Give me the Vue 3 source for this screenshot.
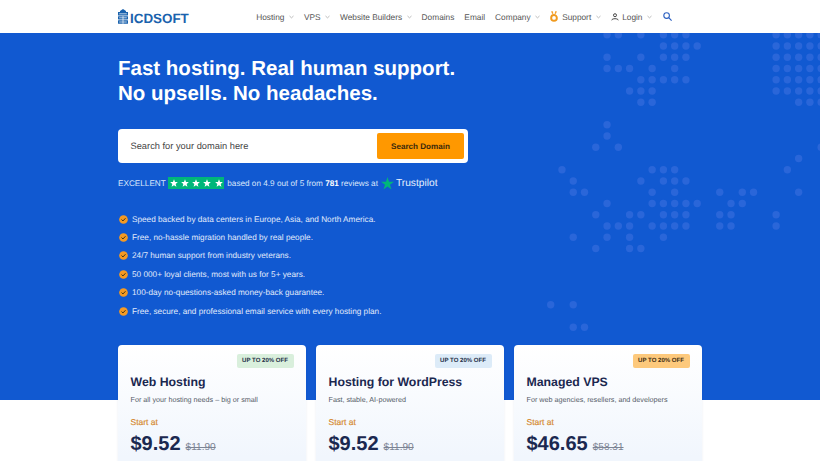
<script setup>
const navItems = [
  { label: 'Hosting', chevron: true },
  { label: 'VPS', chevron: true },
  { label: 'Website Builders', chevron: true },
  { label: 'Domains' },
  { label: 'Email' },
  { label: 'Company', chevron: true },
  { label: 'Support', chevron: true, icon: 'medal' },
  { label: 'Login', chevron: true, icon: 'user' },
]
const benefits = [
  'Speed backed by data centers in Europe, Asia, and North America.',
  'Free, no-hassle migration handled by real people.',
  '24/7 human support from industry veterans.',
  '50 000+ loyal clients, most with us for 5+ years.',
  '100-day no-questions-asked money-back guarantee.',
  'Free, secure, and professional email service with every hosting plan.',
]
const plans = [
  { title: 'Web Hosting', desc: 'For all your hosting needs – big or small', price: '$9.52', old: '$11.90', tone: 'green' },
  { title: 'Hosting for WordPress', desc: 'Fast, stable, AI-powered', price: '$9.52', old: '$11.90', tone: 'blue' },
  { title: 'Managed VPS', desc: 'For web agencies, resellers, and developers', price: '$46.65', old: '$58.31', tone: 'orange' },
]
const rows = {
  0: [5, 6, 8, 10, 11, 12, 20, 21, 22, 23, 24],
  1: [10, 11, 12, 13, 20, 21, 22, 23, 24],
  2: [5, 8, 10, 11, 12, 20, 21, 22, 23, 24],
  3: [5, 6, 7, 9, 11, 20, 21, 22, 23, 24],
  4: [8, 9, 10, 11, 12, 20, 21, 22, 23, 24],
  5: [7, 8, 9, 20, 21, 22, 23, 24],
  6: [8, 9, 22, 23, 24],
  8: [5],
  9: [5],
  10: [4, 6, 24],
  11: [22],
  12: [1, 9, 10, 11, 21],
  13: [2, 8, 10, 11, 12],
  14: [2, 3, 9, 11, 15, 17, 18, 22],
  15: [5, 9, 10, 11, 12, 13, 16, 17],
  16: [4, 7, 8, 10, 11, 12, 15, 16, 20],
  17: [5, 6, 7, 9, 10, 11, 12, 15, 16, 20],
  18: [2, 5, 7, 10],
  19: [4, 7, 8],
  24: [0, 2],
  26: [2, 3],
}
const dots = Object.entries(rows).flatMap(([r, cols]) =>
  cols.map((c) => ({ x: 70.7 + 11.27 * c, y: 1.7 + 11.25 * Number(r) }))
)
</script>

<template>
  <div class="page">
    <header class="topbar">
      <div class="brand">
        <svg class="brand-icon" viewBox="0 0 10 15" width="10" height="15" aria-hidden="true">
          <path d="M5 0 L8 2 V3 H10 V6.4 H0 V3 H2 V2 Z" fill="#1a62ad" />
          <rect x="0" y="7.2" width="10" height="3.2" rx=".4" fill="#1a62ad" />
          <rect x="0" y="11.2" width="10" height="3.6" rx=".4" fill="#1a62ad" />
          <path d="M1.2 4.8 H8.8 M1.2 8.8 H8.8 M1.2 13 H8.8" stroke="#fff" stroke-width=".7" />
          <path d="M5 7.2 V14.8" stroke="#fff" stroke-width=".7" />
        </svg>
        <span class="brand-name">ICDSOFT</span>
      </div>
      <nav class="nav">
        <a v-for="item in navItems" :key="item.label" class="nav-item" :class="{ 'has-chevron': item.chevron }">
          <svg v-if="item.icon === 'medal'" class="medal" viewBox="0 0 9 12" width="8" height="11" aria-hidden="true">
            <path d="M2 0 L3.2 3 M7 0 L5.8 3" stroke="#f4a12c" stroke-width="1.6" />
            <circle cx="4.5" cy="7.6" r="3.2" fill="none" stroke="#f09a1f" stroke-width="2.2" />
          </svg>
          <svg v-if="item.icon === 'user'" class="user" viewBox="0 0 9 9" width="8" height="8" aria-hidden="true">
            <circle cx="4.5" cy="2.5" r="1.7" fill="none" stroke="#333" stroke-width="1" />
            <path d="M.8 8.2 C1 5.8 8 5.8 8.2 8.2" fill="none" stroke="#333" stroke-width="1" />
          </svg>
          <span>{{ item.label }}</span>
          <svg v-if="item.chevron" class="chevron" viewBox="0 0 6 4" width="5" height="4" aria-hidden="true">
            <path d="M.6 .8 L3 3 L5.4 .8" fill="none" stroke="#9a9a9a" stroke-width=".8" />
          </svg>
        </a>
        <svg class="search-icon" viewBox="0 0 9 9" width="9" height="9" aria-hidden="true">
          <circle cx="3.6" cy="3.6" r="2.8" fill="none" stroke="#2a5fc0" stroke-width="1.1" />
          <path d="M5.7 5.7 L8.6 8.6" stroke="#2a5fc0" stroke-width="1.2" />
        </svg>
      </nav>
    </header>

    <section class="hero">
      <svg class="map" width="340" height="310" viewBox="0 0 340 310" aria-hidden="true">
        <circle v-for="(d, i) in dots" :key="i" :cx="d.x" :cy="d.y" r="3.7" fill="#2a66d9" />
      </svg>
      <div class="hero-inner">
        <h1>Fast hosting. Real human support.<br />No upsells. No headaches.</h1>
        <div class="search-box">
          <span class="placeholder">Search for your domain here</span>
          <button class="search-btn">Search Domain</button>
        </div>
        <div class="rating">
          <span>EXCELLENT</span>
          <span class="stars">
            <svg v-for="n in 5" :key="n" viewBox="0 0 10 10" width="8" height="8" aria-hidden="true">
              <path d="M5 .4 L6.3 3.7 L9.8 3.9 L7.1 6.1 L8 9.6 L5 7.7 L2 9.6 L2.9 6.1 L.2 3.9 L3.7 3.7 Z" fill="#fff" />
            </svg>
          </span>
          <span>based on 4.9 out of 5 from <b>781</b> reviews at</span>
          <span class="tp">
            <svg viewBox="0 0 12 12" width="13" height="13" aria-hidden="true">
              <path d="M6 0 L7.4 4.4 L12 4.4 L8.3 7.1 L9.7 11.6 L6 8.8 L2.3 11.6 L3.7 7.1 L0 4.4 L4.6 4.4 Z" fill="#00b67a" />
            </svg>
            <span class="tp-name">Trustpilot</span>
          </span>
        </div>
        <ul class="benefits">
          <li v-for="b in benefits" :key="b">
            <svg viewBox="0 0 10 10" width="9" height="9" aria-hidden="true">
              <circle cx="5" cy="5" r="4.8" fill="#f59a23" />
              <path d="M2.8 5.1 L4.4 6.6 L7.2 3.6" fill="none" stroke="#3a3216" stroke-width="1.1" />
            </svg>
            <span>{{ b }}</span>
          </li>
        </ul>
      </div>
    </section>

    <section class="plans">
      <article v-for="p in plans" :key="p.title" class="card">
        <span class="badge" :class="p.tone">UP TO 20% OFF</span>
        <h2>{{ p.title }}</h2>
        <p class="desc">{{ p.desc }}</p>
        <p class="start">Start at</p>
        <div class="price-row">
          <span class="price">{{ p.price }}</span>
          <span class="old">{{ p.old }}</span>
        </div>
        <p class="per">USD per month</p>
      </article>
    </section>
  </div>
</template>

<style>
html, body { margin: 0; background: #fff; }
</style>

<style scoped>
.page {
  height: 461px;
  overflow: hidden;
  font-family: "Liberation Sans", Arial, sans-serif;
  color: #222;
  background: #fff;
  text-rendering: geometricPrecision;
}
.topbar {
  height: 33px;
  display: flex;
  align-items: center;
  justify-content: space-between;
  padding: 0 148px 0 118px;
  box-sizing: border-box;
  background: #fff;
}
.brand { display: flex; align-items: flex-end; height: 15px; }
.brand-icon { display: block; }
.brand-name {
  font-size: 13.4px;
  font-weight: 700;
  color: #1a62ad;
  line-height: 11px;
  margin-left: 2px;
}
.nav { display: flex; align-items: center; font-size: 8.3px; color: #555; }
.nav-item { display: flex; align-items: center; margin-right: 10px; }
.chevron { margin-left: 4.5px; }
.medal { margin-right: 4px; }
.user { margin-right: 3.5px; }
.search-icon { margin-left: 1px; }

.hero {
  position: relative;
  height: 367px;
  background: #1159d1;
  overflow: hidden;
}
.map { position: absolute; left: 480px; top: 0; }
.hero-inner { position: relative; padding: 24px 0 0 118px; }
h1 {
  margin: 0;
  color: #fff;
  font-size: 20.5px;
  line-height: 24.5px;
  font-weight: 700;
}
.search-box {
  width: 350px;
  height: 34px;
  margin-top: 23px;
  box-sizing: border-box;
  padding: 4px 4px 4px 12.5px;
  display: flex;
  align-items: center;
  justify-content: space-between;
  background: #fff;
  border-radius: 4px;
}
.placeholder { font-size: 9.3px; color: #444; }
.search-btn {
  width: 87px;
  height: 26px;
  border: 0;
  padding: 0;
  border-radius: 2px;
  background: #ff9800;
  color: #3b2a0c;
  font: 700 8.1px "Liberation Sans", Arial, sans-serif;
  text-rendering: geometricPrecision;
}
.rating {
  display: flex;
  align-items: center;
  margin-top: 13px;
  height: 14px;
  color: #dbe7fb;
  font-size: 8.2px;
}
.rating b { color: #fff; }
.stars {
  display: flex;
  align-items: center;
  justify-content: space-around;
  width: 56px;
  height: 12px;
  margin: 0 3px 0 2.5px;
  background: #00b67a;
}
.stars svg { display: block; }
.tp { display: flex; align-items: center; margin-left: 3px; }
.tp-name { font-size: 10.2px; color: #e8f0fd; margin-left: 2px; }
.benefits {
  list-style: none;
  margin: 20px 0 0 0.5px;
  padding: 0;
  color: #e0eafb;
  font-size: 8.23px;
}
.benefits li { display: flex; align-items: center; height: 18.4px; }
.benefits svg { margin-right: 4.5px; flex: none; }

.plans {
  display: grid;
  grid-template-columns: repeat(3, 188px);
  gap: 10px;
  margin: -55px 0 0 118px;
  position: relative;
}
.card {
  position: relative;
  height: 160px;
  box-sizing: border-box;
  padding: 29.5px 12.5px 0;
  border-radius: 4px;
  background: linear-gradient(180deg, #fff 0%, #f1f6fd 70%);
  box-shadow: 0 1px 3px rgba(20, 50, 110, 0.08);
}
.badge {
  position: absolute;
  top: 9px;
  right: 12.5px;
  height: 14px;
  width: 57px;
  border-radius: 2px;
  display: flex;
  align-items: center;
  justify-content: center;
  font-size: 6.05px;
  font-weight: 700;
  color: #253047;
}
.badge.green { background: #d9efdc; }
.badge.blue { background: #dcebf8; }
.badge.orange { background: #fdc97c; color: #3d2e14; }
h2 {
  margin: 0;
  font-size: 12.3px;
  line-height: 15px;
  font-weight: 700;
  color: #1b2850;
}
.desc { margin: 5px 0 0; font-size: 7.2px; line-height: 10px; color: #555c68; }
.start { margin: 11px 0 0; font-size: 8.5px; line-height: 12px; color: #d4862a; -webkit-text-stroke: 0.15px #d4862a; }
.price-row { display: flex; align-items: baseline; margin-top: 4px; height: 24px; }
.price { font-size: 20px; line-height: 24px; font-weight: 700; color: #1b2850; }
.old { margin-left: 5px; font-size: 10.1px; color: #7c8494; text-decoration: line-through; }
.per { margin: 5px 0 0; font-size: 7.6px; line-height: 10px; color: #222; }
</style>
